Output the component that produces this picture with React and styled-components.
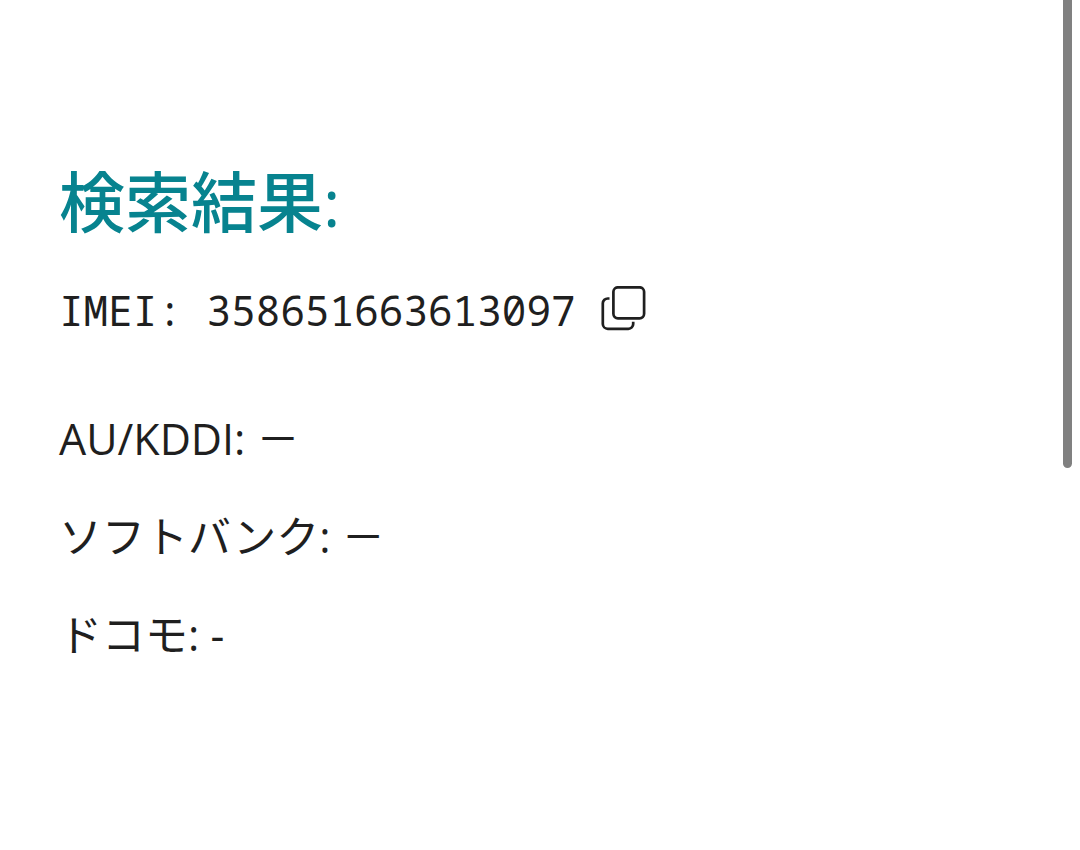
import React from "react";
import styled, { createGlobalStyle } from "styled-components";

const GlobalStyle = createGlobalStyle`
  *, *::before, *::after { box-sizing: border-box; }
  body {
    margin: 0;
    background: #fff;
    color: #1f1f1f;
    font-family: "Open Sans", "Noto Sans CJK JP", sans-serif;
    font-size: 43px;
  }
`;

const Page = styled.main`
  min-height: 100vh;
  padding: 151px 60px 60px 59px;
`;

const Title = styled.h1`
  margin: 0;
  color: #07838f;
  font-size: 66px;
  font-weight: 500;
  line-height: 100px;
`;

const ImeiRow = styled.div`
  display: flex;
  align-items: center;
  gap: 24px;
  margin-top: 26px;
`;

const Imei = styled.span`
  font-family: "Noto Sans Mono", "DejaVu Sans Mono", monospace;
  font-size: 41px;
  font-weight: 450;
  line-height: 66px;
`;

const CopyButton = styled.button`
  display: flex;
  padding: 0;
  border: 0;
  background: none;
  color: inherit;
  cursor: pointer;
`;

const CarrierList = styled.ul`
  display: flex;
  flex-direction: column;
  gap: 32px;
  margin: 63px 0 0;
  padding: 0;
  list-style: none;
`;

const Carrier = styled.li`
  line-height: 66px;
`;

const ScrollThumb = styled.div`
  position: fixed;
  top: 0;
  right: 8px;
  width: 9px;
  height: 55vh;
  border-radius: 0 0 5px 5px;
  background: #808080;
`;

const carriers = [
  { name: "AU/KDDI", status: "－" },
  { name: "ソフトバンク", status: "－" },
  { name: "ドコモ", status: "-" },
];

function CopyIcon() {
  return (
    <svg width="46" height="48" viewBox="0 1 46 48" fill="none" stroke="currentColor" strokeWidth="2.7" strokeLinecap="butt" aria-hidden="true">
      <rect x="13.4" y="2.3" width="30.7" height="31" rx="4.5" />
      <path d="M9.5 13.5H8A5 5 0 0 0 2.8 18.4V38.9A5 5 0 0 0 7.8 43.8H28.4A4.8 4.8 0 0 0 33.2 39V36.8" />
    </svg>
  );
}

export default function App() {
  return (
    <>
      <GlobalStyle />
      <Page>
        <Title>検索結果:</Title>
        <ImeiRow>
          <Imei>IMEI: 358651663613097</Imei>
          <CopyButton type="button" aria-label="IMEIをコピー">
            <CopyIcon />
          </CopyButton>
        </ImeiRow>
        <CarrierList>
          {carriers.map(({ name, status }) => (
            <Carrier key={name}>{name}: {status}</Carrier>
          ))}
        </CarrierList>
      </Page>
      <ScrollThumb />
    </>
  );
}
